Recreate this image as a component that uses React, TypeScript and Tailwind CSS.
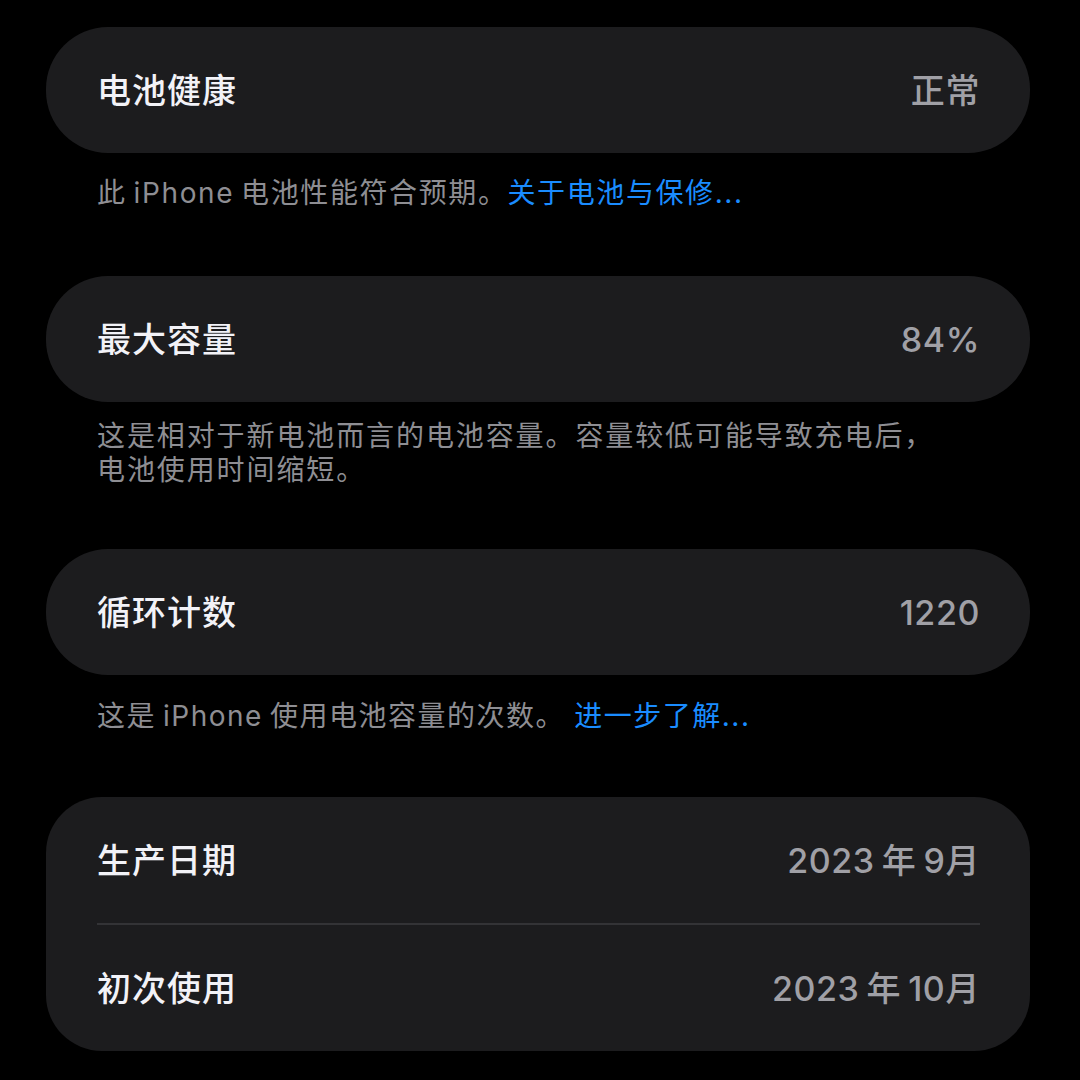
import React from 'react';

const font = { fontFamily: 'Inter, "Noto Sans CJK SC", sans-serif' };

function Row({ label, value }: { label: React.ReactNode; value: React.ReactNode }) {
  return (
    <div className="flex items-center justify-between h-[126px] pl-[51px] pr-[50px]">
      <span className="text-[34px] font-medium text-[#f2f2f7] tracking-[1px]">{label}</span>
      <span className="text-[34px] font-medium text-[#a0a0a6] tracking-[0.6px]">{value}</span>
    </div>
  );
}

function Footer({ children, className }: { children: React.ReactNode; className: string }) {
  return (
    <p className={`pl-[51px] pr-[40px] text-[28px] leading-[34px] text-[#8e8e93] ${className}`}>
      {children}
    </p>
  );
}

// small gap, like iOS inserts between CJK and Latin
const Gap = () => <span className="inline-block w-[7px]" />;

export default function App() {
  return (
    <div className="w-[1080px] h-[1080px] bg-black overflow-hidden pl-[46px] pr-[50px] pt-[27px]" style={font}>
      <div className="bg-[#1c1c1e] rounded-[62px]">
        <Row label="电池健康" value="正常" />
      </div>
      <Footer className="mt-[23px] mb-[66px] tracking-[1.6px]">
        此<Gap />iPhone<Gap />电池性能符合预期。<span className="text-[#1a8cff]">关于电池与保修...</span>
      </Footer>

      <div className="bg-[#1c1c1e] rounded-[62px]">
        <Row label="最大容量" value="84%" />
      </div>
      <Footer className="mt-[17px] mb-[62px] tracking-[1.9px]">
        这是相对于新电池而言的电池容量。容量较低可能导致充电后，
        <br />
        电池使用时间缩短。
      </Footer>

      <div className="bg-[#1c1c1e] rounded-[62px]">
        <Row label="循环计数" value="1220" />
      </div>
      <Footer className="mt-[24px] mb-[64px] tracking-[1.5px]">
        这是<Gap />iPhone<Gap />使用电池容量的次数。 <span className="text-[#1a8cff]">进一步了解...</span>
      </Footer>

      <div className="bg-[#1c1c1e] rounded-[56px] mt-[2px]">
        <Row label="生产日期" value={<>2023<Gap />年<Gap />9月</>} />
        <div className="ml-[51px] mr-[50px] h-[2px] bg-[#333336]" />
        <Row label="初次使用" value={<>2023<Gap />年<Gap />10月</>} />
      </div>
    </div>
  );
}
